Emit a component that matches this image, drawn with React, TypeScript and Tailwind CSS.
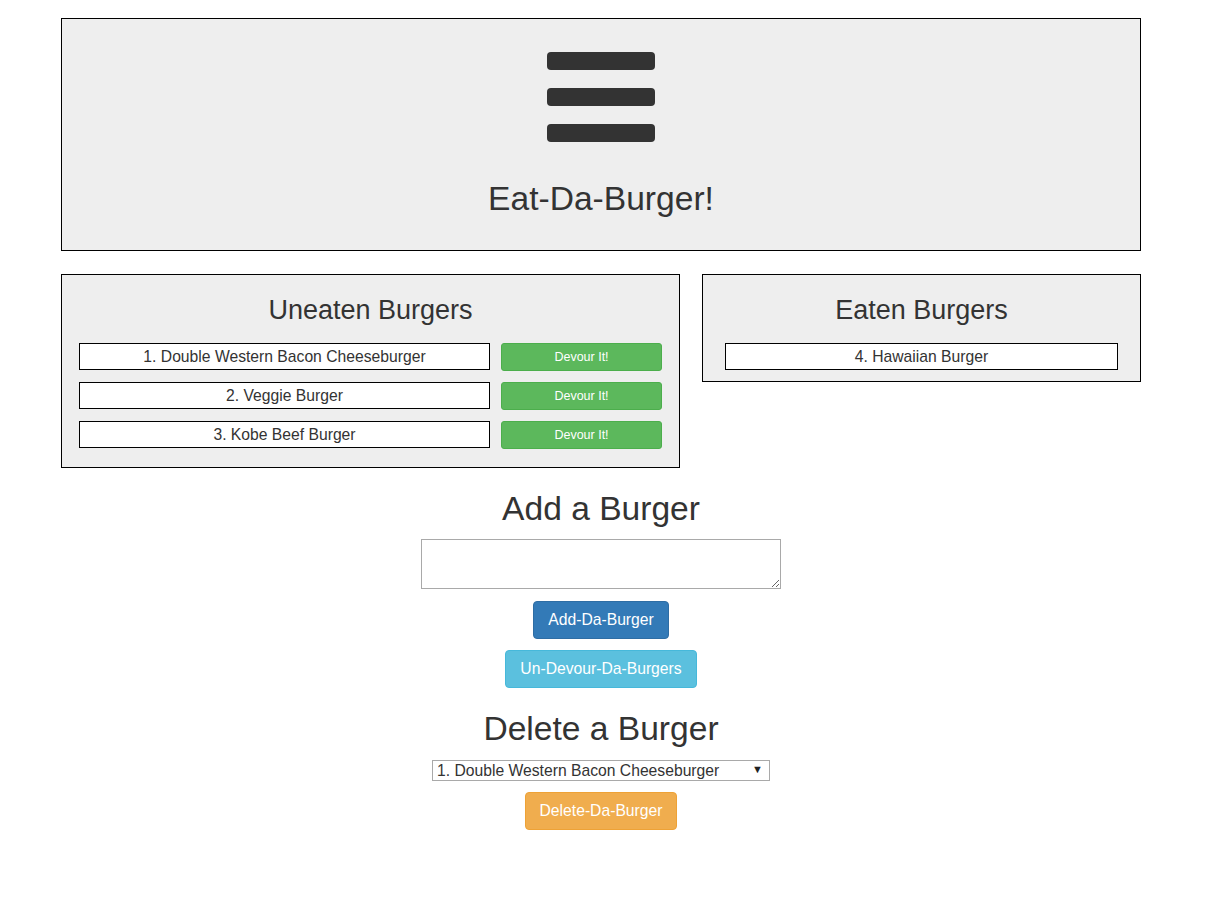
import React from "react";

const uneaten = [
  { id: 1, name: "Double Western Bacon Cheeseburger" },
  { id: 2, name: "Veggie Burger" },
  { id: 3, name: "Kobe Beef Burger" },
];

const eaten = [{ id: 4, name: "Hawaiian Burger" }];

const BurgerIcon = () => (
  <svg width="108" height="90" viewBox="0 0 108 90" fill="#333">
    <rect x="0" y="0" width="108" height="18" rx="4" />
    <rect x="0" y="36" width="108" height="18" rx="4" />
    <rect x="0" y="72" width="108" height="18" rx="4" />
  </svg>
);

export default function App() {
  return (
    <div className="w-[1206px] min-h-[905px] bg-white pt-[18px] text-[#333] font-['Liberation_Sans',Arial,sans-serif]">
      <div className="ml-[61px] w-[1080px] flex flex-col">
        {/* header */}
        <div className="h-[233px] border border-black bg-[#eee] flex flex-col items-center pt-[33px]">
          <BurgerIcon />
          <h1 className="mt-[37px] text-[33.6px] leading-[39px] font-normal">Eat-Da-Burger!</h1>
        </div>

        {/* burger lists */}
        <div className="mt-[23px] flex items-start gap-[22px]">
          <div className="w-[619px] border border-black bg-[#eee] px-[17px] pt-[19px] pb-[18px]">
            <h2 className="text-center text-[27px] leading-[33px] font-normal">Uneaten Burgers</h2>
            <div className="mt-[16px] flex flex-col gap-[11px]">
              {uneaten.map((b) => (
                <div key={b.id} className="flex items-start gap-[11px]">
                  <div className="w-[411px] h-[27px] border border-black bg-white text-center text-[15.7px] leading-[25px]">
                    {b.id}. {b.name}
                  </div>
                  <button className="w-[161px] h-[28px] rounded-[3px] border border-[#4cae4c] bg-[#5cb85c] text-white text-[12.5px] leading-none">
                    Devour It!
                  </button>
                </div>
              ))}
            </div>
          </div>

          <div className="w-[439px] border border-black bg-[#eee] px-[22px] pt-[19px] pb-[11px]">
            <h2 className="text-center text-[27px] leading-[33px] font-normal">Eaten Burgers</h2>
            <div className="mt-[16px] flex flex-col gap-[11px]">
              {eaten.map((b) => (
                <div key={b.id} className="h-[27px] border border-black bg-white text-center text-[15.7px] leading-[25px]">
                  {b.id}. {b.name}
                </div>
              ))}
            </div>
          </div>
        </div>

        {/* add / delete */}
        <div className="mt-[21px] flex flex-col items-center">
          <h2 className="text-[33.6px] leading-[40px] font-normal">Add a Burger</h2>
          <textarea className="mt-[10px] w-[360px] h-[50px] border border-[#a9a9a9] bg-white" />
          <button className="mt-[12px] w-[136px] h-[38px] rounded-[4px] border border-[#2e6da4] bg-[#337ab7] text-white text-[15.7px]">
            Add-Da-Burger
          </button>
          <button className="mt-[11px] w-[192px] h-[38px] rounded-[4px] border border-[#46b8da] bg-[#5bc0de] text-white text-[15.7px]">
            Un-Devour-Da-Burgers
          </button>

          <h2 className="mt-[21px] text-[33.6px] leading-[40px] font-normal">Delete a Burger</h2>
          <div className="relative mt-[10px] w-[338px] h-[21px]">
            <select className="appearance-none w-full h-full border border-[#a9a9a9] bg-white pl-[4px] text-[15.7px] leading-[19px] text-[#333]">
              {uneaten.concat(eaten).map((b) => (
                <option key={b.id}>
                  {b.id}. {b.name}
                </option>
              ))}
            </select>
            <span className="pointer-events-none absolute right-[7px] top-[2px] text-[11px] leading-[17px] text-[#222]">▼</span>
          </div>
          <button className="mt-[12px] w-[152px] h-[38px] rounded-[4px] border border-[#eea236] bg-[#f0ad4e] text-white text-[15.7px]">
            Delete-Da-Burger
          </button>
        </div>
      </div>
    </div>
  );
}
